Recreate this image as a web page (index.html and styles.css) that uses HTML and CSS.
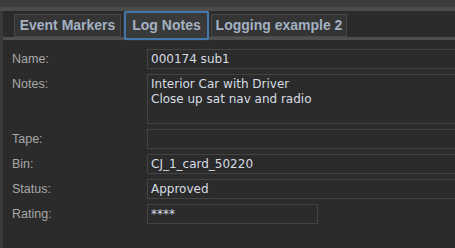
FILE: index.html
```html
<!DOCTYPE html>
<html lang="en">
<head>
  <meta charset="UTF-8">
  <title>Log Notes</title>
  <link rel="stylesheet" href="styles.css">
</head>
<body>
  <div class="top-strip"></div>

  <div class="window">
    <div class="tabbar">
      <div class="tab tab-events">Event Markers</div>
      <div class="tab tab-notes active">Log Notes</div>
      <div class="tab tab-logging">Logging example 2</div>
    </div>

    <div class="panel">
      <div class="form">
        <label>Name:</label>
        <div class="field">000174 sub1</div>

        <label>Notes:</label>
        <div class="field notes">Interior Car with Driver<br>Close up sat nav and radio</div>

        <label>Tape:</label>
        <div class="field"></div>

        <label>Bin:</label>
        <div class="field">CJ_1_card_50220</div>

        <label>Status:</label>
        <div class="field">Approved</div>

        <label>Rating:</label>
        <div class="field rating">****</div>
      </div>
    </div>
  </div>
</body>
</html>
```

FILE: styles.css
```css
/* GENERAL */
body {
  margin: 0;
  height: 248px;
  overflow: hidden;
  background: #3a3a3a;
}

.top-strip {
  height: 7px;
  background: #3d3d3d;
  border-bottom: 4px solid #4c4c4c;
}

.window {
  margin-left: 3px;
  height: 237px;
  background: #2b2b2b;
}

/* TABS */
.tabbar {
  display: flex;
  align-items: flex-end;
  height: 26px;
  padding-left: 11px;
}

.tab {
  box-sizing: border-box;
  height: 23px;
  border: 1px solid #484848;
  background: #343434;
  color: #a3b1c2;
  font-family: "Liberation Sans", Arial, sans-serif;
  font-weight: bold;
  font-size: 14px;
  line-height: 21px;
  text-align: center;
  white-space: nowrap;
}

.tab-events {
  width: 107px;
  margin-right: 3px;
}

.tab-notes {
  width: 85px;
  margin-right: 2px;
}

.tab-logging {
  width: 136px;
}

.tab.active {
  position: relative;
  z-index: 1;
  height: 29px;
  margin-bottom: -3px;
  border: 2px solid #4477a9;
  border-radius: 3px;
  background: #3a3a3a;
  line-height: 25px;
  box-shadow: 0 0 1px #6d9ccc;
}

/* FORM */
.panel {
  border-top: 3px solid #4f4f4f;
  padding: 9px 0 0 9px;
}

.form {
  display: grid;
  grid-template-columns: 135px 320px;
  row-gap: 5px;
}

.form label {
  color: #a8a8a8;
  font-family: "Liberation Sans", Arial, sans-serif;
  font-size: 12.5px;
  line-height: 20px;
}

.field {
  box-sizing: border-box;
  height: 20px;
  padding: 0 3px;
  border: 1px solid #444444;
  background: #2b2b2b;
  color: #d6dce4;
  font-family: "DejaVu Sans", sans-serif;
  font-size: 12px;
  line-height: 18px;
  white-space: nowrap;
}

.field.notes {
  height: 50px;
  padding-top: 2px;
  line-height: 15px;
}

.field.rating {
  width: 171px;
}
```
